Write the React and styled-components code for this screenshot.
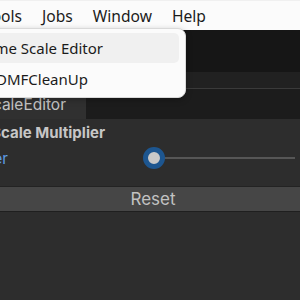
import React from "react";
import styled, { createGlobalStyle } from "styled-components";

const Global = createGlobalStyle`
  html, body { margin: 0; padding: 0; }
  body { width: 300px; height: 300px; overflow: hidden; background: #2d2d2d; }
`;

const Page = styled.div`
  position: relative;
  width: 300px;
  height: 300px;
  overflow: hidden;
  display: flex;
  flex-direction: column;
`;

const MenuBar = styled.div`
  height: 30px;
  flex: none;
  background: #fbfbfb;
  border-top: 1px solid #f0f0f0;
  box-sizing: border-box;
  display: flex;
  align-items: center;
  gap: 20px;
  font-family: "Noto Sans", "Open Sans", sans-serif;
  font-size: 15.6px;
  color: #1b1b1b;
`;

const Clip = styled.div`
  flex: none;
  width: ${(p) => p.$w}px;
  display: flex;
  justify-content: flex-end;
  white-space: nowrap;
`;

const MenuItem = styled.span`
  white-space: nowrap;
`;

const Toolbar = styled.div`
  height: 42px;
  flex: none;
  background: #161616;
`;

const Strip = styled.div`
  height: 16px;
  flex: none;
  background: #212121;
  border-bottom: 1px solid #3a3a3a;
`;

const TabBar = styled.div`
  height: 30px;
  flex: none;
  background: #1c1c1c;
  display: flex;
  font-family: Inter, "Noto Sans", sans-serif;
  font-size: 15.5px;
  color: #c4c4c4;
`;

const Tab = styled.div`
  width: 86px;
  padding-right: 20px;
  box-sizing: border-box;
  background: #303030;
  display: flex;
  align-items: center;
  justify-content: flex-end;
  white-space: nowrap;
  overflow: hidden;
`;

const Panel = styled.div`
  flex: 1;
  background: #2d2d2d;
  display: flex;
  flex-direction: column;
  font-family: Inter, "Noto Sans", sans-serif;
  color: #c6c6c6;
`;

const Header = styled.div`
  height: 26px;
  display: flex;
  align-items: center;
  font-weight: 700;
  font-size: 15px;
`;

const SliderRow = styled.div`
  height: 26px;
  display: grid;
  grid-template-columns: 143px 1fr;
  align-items: center;
  padding-right: 5px;
  font-size: 15px;
  color: #5d9ce6;
`;

const Slider = styled.div`
  position: relative;
  height: 22px;
  display: flex;
  align-items: center;
`;

const Track = styled.div`
  margin-left: 10px;
  flex: 1;
  height: 2px;
  background: #565656;
`;

const Thumb = styled.div`
  position: absolute;
  left: 0;
  top: 0;
  width: 12px;
  height: 12px;
  border-radius: 50%;
  background: #c9c9c9;
  border: 5px solid #1d5690;
`;

const Spacer = styled.div`
  height: 15px;
`;

const ResetBar = styled.div`
  height: 24px;
  border-top: 1px solid #232323;
  border-bottom: 1px solid #1f1f1f;
  background: #464646;
  display: flex;
  align-items: center;
  justify-content: center;
  font-size: 17px;
  color: #c2c2c2;
  padding-left: 6px;
`;

const Dropdown = styled.div`
  position: absolute;
  top: 28px;
  left: -20px;
  width: 206px;
  box-sizing: border-box;
  background: #fbfbfb;
  border: 1px solid #d9d9d9;
  border-radius: 8px;
  box-shadow: 0 2px 6px rgba(0, 0, 0, 0.25);
  padding: 4px 6px 3px 0;
  display: flex;
  flex-direction: column;
  gap: 1px;
  font-family: "Noto Sans", "Open Sans", sans-serif;
  font-size: 15px;
  color: #1b1b1b;
`;

const DropItem = styled.div`
  height: 30px;
  padding-left: 19px;
  border-radius: 5px;
  display: flex;
  align-items: center;
  background: ${(p) => (p.$active ? "#f0f0f0" : "transparent")};
`;

export default function App() {
  return (
    <>
      <Global />
      <Page>
        <MenuBar>
          <Clip $w={22}>
            <MenuItem>Tools</MenuItem>
          </Clip>
          <MenuItem>Jobs</MenuItem>
          <MenuItem>Window</MenuItem>
          <MenuItem>Help</MenuItem>
        </MenuBar>
        <Toolbar />
        <Strip />
        <TabBar>
          <Tab>TimeScaleEditor</Tab>
        </TabBar>
        <Panel>
          <Header>
            <Clip $w={105}>Time Scale Multiplier</Clip>
          </Header>
          <SliderRow>
            <Clip $w={8}>Multiplier</Clip>
            <Slider>
              <Thumb />
              <Track />
            </Slider>
          </SliderRow>
          <Spacer />
          <ResetBar>Reset</ResetBar>
        </Panel>
        <Dropdown>
          <DropItem $active>
            <Clip $w={103}>Time Scale Editor</Clip>
          </DropItem>
          <DropItem>
            <Clip $w={88}>FDMFCleanUp</Clip>
          </DropItem>
        </Dropdown>
      </Page>
    </>
  );
}
